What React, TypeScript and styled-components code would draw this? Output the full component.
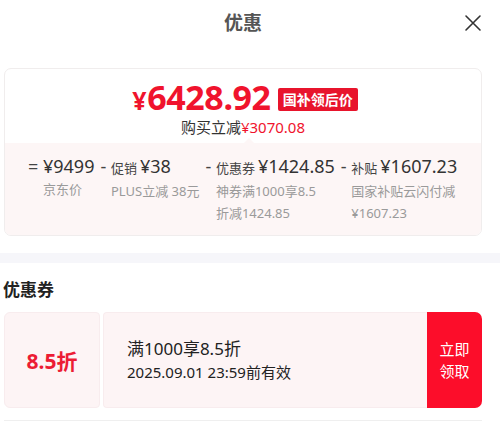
import styled, { createGlobalStyle } from "styled-components";

const GlobalStyle = createGlobalStyle`
    *, *::before, *::after {
        box-sizing: border-box;
    }
    body {
        margin: 0;
        background: #ffffff;
        font-family: "Noto Sans", "Noto Sans CJK SC", sans-serif;
        color: #222222;
    }
`;

const Page = styled.div`
    width: 500px;
    display: flex;
    flex-direction: column;
`;

const Header = styled.header`
    display: grid;
    grid-template-columns: 1fr auto 1fr;
    align-items: center;
    height: 46px;
    padding: 0 18px 0 4px;
`;

const Title = styled.h1`
    grid-column: 2;
    margin: 0;
    font-size: 19px;
    font-weight: 700;
    color: #555555;
    line-height: 24px;
`;

const Close = styled.button`
    justify-self: end;
    width: 18px;
    height: 18px;
    padding: 0;
    border: none;
    background: none;
    display: flex;
`;

const Card = styled.section`
    position: relative;
    margin: 22px 18px 0 4px;
    border: 1px solid #f0eded;
    border-radius: 7px;
    overflow: hidden;
`;

const Top = styled.div`
    display: flex;
    flex-direction: column;
    align-items: center;
    padding: 11px 0 5px;
`;

const PriceLine = styled.div`
    display: flex;
    align-items: center;
    gap: 7px;
    height: 36px;
    margin-left: 4px;
`;

const BigPrice = styled.span`
    color: #f0132d;
    font-weight: 700;
    font-size: 34px;
    line-height: 36px;
    letter-spacing: -0.4px;
    small {
        font-size: 25px;
        margin-right: 1px;
    }
`;

const Badge = styled.span`
    background: #e8142c;
    color: #ffffff;
    font-size: 14px;
    font-weight: 700;
    line-height: 23px;
    padding: 0 5px;
    border-radius: 2px;
    margin-top: 2px;
`;

const Saving = styled.div`
    font-size: 15px;
    line-height: 22px;
    color: #333333;
    em {
        font-style: normal;
        color: #f0132d;
    }
`;

const Breakdown = styled.div`
    position: relative;
    display: flex;
    gap: 6px;
    padding: 11px 0 11px 23px;
    background: #fdf6f6;
    &::before {
        content: "";
        position: absolute;
        top: -5px;
        left: 239px;
        border-left: 5px solid transparent;
        border-right: 5px solid transparent;
        border-bottom: 5px solid #fdf6f6;
    }
`;

const Item = styled.div`
    display: flex;
    align-items: flex-start;
`;

const Sign = styled.span`
    font-size: 18px;
    line-height: 24px;
    color: #444444;
    white-space: pre;
`;

const ItemBody = styled.div`
    display: flex;
    flex-direction: column;
`;

const Main = styled.div`
    display: flex;
    align-items: baseline;
    gap: 3px;
    line-height: 24px;
    white-space: nowrap;
`;

const MainLabel = styled.span`
    font-size: 13px;
    color: #444444;
`;

const Amount = styled.span`
    font-size: 18px;
    color: #333333;
`;

const Sub = styled.div`
    font-size: 13px;
    line-height: 22px;
    color: #9a9a9a;
    white-space: nowrap;
`;

const Band = styled.div`
    height: 10px;
    margin-top: 17px;
    background: #f6f6fa;
`;

const SectionTitle = styled.h2`
    margin: 15px 0 0 3px;
    font-size: 17px;
    font-weight: 700;
    line-height: 24px;
    color: #222222;
`;

const Coupon = styled.div`
    display: flex;
    gap: 3px;
    height: 96px;
    margin: 10px 18px 0 4px;
`;

const Stub = styled.div`
    width: 96px;
    display: flex;
    align-items: center;
    justify-content: center;
    background: #fdf4f5;
    border: 1px solid #f8ecee;
    border-radius: 6px 4px 4px 6px;
    color: #ec1c34;
    font-size: 21px;
    font-weight: 700;
`;

const CouponBody = styled.div`
    flex: 1;
    display: flex;
    flex-direction: column;
    justify-content: center;
    padding-left: 23px;
    background: #fdf4f5;
    border: 1px solid #f8ecee;
    border-right: none;
    border-radius: 4px 0 0 4px;
`;

const CouponTitle = styled.div`
    font-size: 17px;
    line-height: 24px;
    color: #222222;
`;

const CouponDate = styled.div`
    font-size: 15px;
    line-height: 22px;
    color: #222222;
`;

const Claim = styled.button`
    width: 55px;
    margin-left: -3px;
    border: none;
    border-radius: 0 7px 7px 0;
    background: #fc0d2a;
    color: #ffffff;
    font-family: inherit;
    font-size: 15px;
    line-height: 22px;
    padding: 0;
`;

const Divider = styled.div`
    height: 1px;
    margin: 12px 18px 0 4px;
    background: #efefef;
`;

const items = [
    { sign: "= ", label: "", amount: "¥9499", sub: ["京东价"] },
    { sign: "- ", label: "促销", amount: "¥38", sub: ["PLUS立减 38元"] },
    { sign: "- ", label: "优惠券", amount: "¥1424.85", sub: ["神券满1000享8.5", "折减1424.85"] },
    { sign: "- ", label: "补贴", amount: "¥1607.23", sub: ["国家补贴云闪付减", "¥1607.23"] },
];

export default function App() {
    return (
        <Page>
            <GlobalStyle />
            <Header>
                <Title>优惠</Title>
                <Close aria-label="关闭">
                    <svg width="18" height="18" viewBox="0 0 18 18">
                        <path d="M2 2L16 16M16 2L2 16" stroke="#333" strokeWidth="1.6" strokeLinecap="round" />
                    </svg>
                </Close>
            </Header>
            <Card>
                <Top>
                    <PriceLine>
                        <BigPrice>
                            <small>¥</small>6428.92
                        </BigPrice>
                        <Badge>国补领后价</Badge>
                    </PriceLine>
                    <Saving>
                        购买立减<em>¥3070.08</em>
                    </Saving>
                </Top>
                <Breakdown>
                    {items.map((it) => (
                        <Item key={it.amount}>
                            <Sign>{it.sign}</Sign>
                            <ItemBody>
                                <Main>
                                    {it.label && <MainLabel>{it.label}</MainLabel>}
                                    <Amount>{it.amount}</Amount>
                                </Main>
                                {it.sub.map((s) => (
                                    <Sub key={s}>{s}</Sub>
                                ))}
                            </ItemBody>
                        </Item>
                    ))}
                </Breakdown>
            </Card>
            <Band />
            <SectionTitle>优惠券</SectionTitle>
            <Coupon>
                <Stub>8.5折</Stub>
                <CouponBody>
                    <CouponTitle>满1000享8.5折</CouponTitle>
                    <CouponDate>2025.09.01 23:59前有效</CouponDate>
                </CouponBody>
                <Claim>
                    立即
                    <br />
                    领取
                </Claim>
            </Coupon>
            <Divider />
        </Page>
    );
}
